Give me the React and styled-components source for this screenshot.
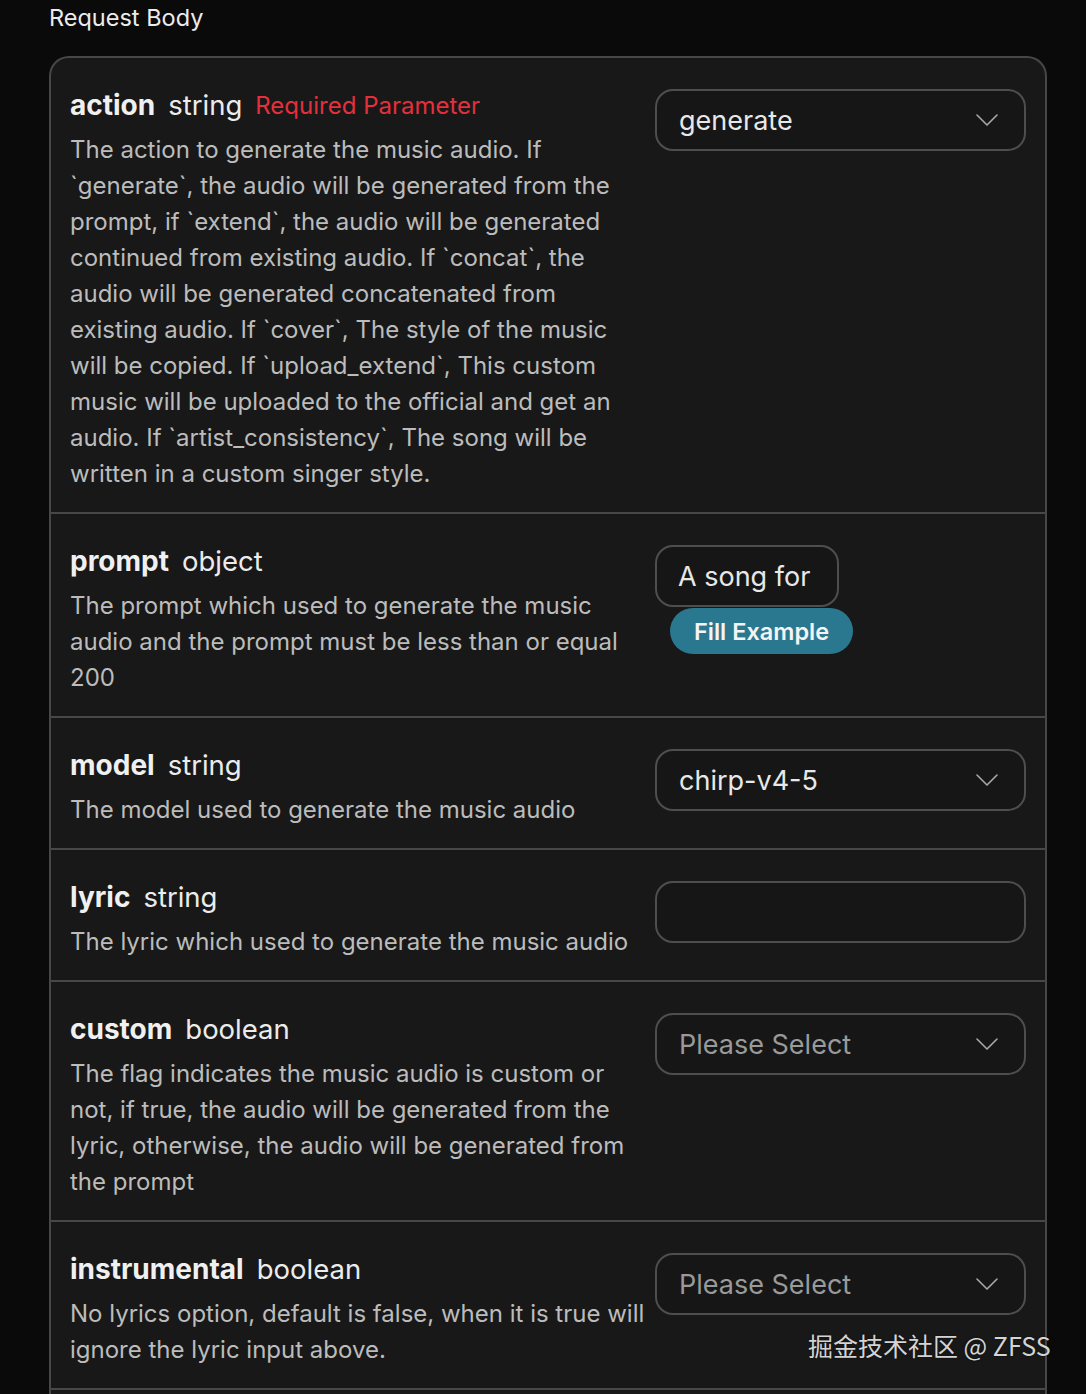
import React from 'react'
import styled, { createGlobalStyle } from 'styled-components'

const GlobalStyle = createGlobalStyle`
  body {
    margin: 0;
    background: #0a0a0a;
    font-family: Inter, "Noto Sans", "Noto Sans CJK SC", sans-serif;
    -webkit-font-smoothing: antialiased;
  }
`

const Page = styled.div`
  position: relative;
  padding: 3px 39px 0 49px;
`

const Heading = styled.h3`
  margin: 0 0 23px;
  font-size: 23.5px;
  line-height: 30px;
  font-weight: 400;
  color: #ececec;
`

const Card = styled.div`
  background: #181818;
  border: 2px solid #474747;
  border-bottom: none;
  border-radius: 20px 20px 0 0;
  overflow: hidden;
`

const Row = styled.div`
  display: flex;
  gap: 9px;
  padding: 31px 19px 20px 19px;
  border-top: ${props => (props.first ? 'none' : '2px solid #474747')};
`

const Info = styled.div`
  width: 576px;
  flex: none;
`

const TitleLine = styled.div`
  display: flex;
  align-items: baseline;
  gap: 13px;
  height: 32px;
  line-height: 32px;
  margin-bottom: 11px;
`

const Name = styled.span`
  font-size: 28px;
  font-weight: 700;
  color: #f0f0f0;
`

const Type = styled.span`
  font-size: 27.5px;
  font-weight: 400;
  color: #ececec;
`

const Required = styled.span`
  font-size: 24px;
  color: #e3303c;
  position: relative;
  top: -1px;
`

const Desc = styled.div`
  font-size: 24px;
  line-height: 36px;
  color: #bcbcbc;
`

const Control = styled.div`
  flex: 1;
  display: flex;
  flex-direction: column;
  align-items: flex-start;
`

const Field = styled.div`
  box-sizing: border-box;
  width: ${props => props.width || '100%'};
  height: 62px;
  border: 2px solid #4e4e4e;
  border-radius: 18px;
  background: #161616;
  display: flex;
  align-items: center;
  justify-content: space-between;
  padding: 0 ${props => props.padRight || 26}px 0 ${props => props.padLeft || 22}px;
  font-size: 27px;
  color: ${props => (props.placeholder ? '#9a9a9a' : '#e8e8e8')};
  white-space: nowrap;
`

const FieldText = styled.span`
  overflow: hidden;
  flex: 1;
`

const FillButton = styled.button`
  margin: 1px 0 0 15px;
  height: 46px;
  padding: 0 24px;
  border: none;
  border-radius: 23px;
  background: #2a7890;
  color: #f4f4f4;
  font-family: inherit;
  font-size: 23.5px;
  font-weight: 600;
`

const Watermark = styled.div`
  position: absolute;
  left: 808px;
  top: 1328px;
  font-size: 25px;
  line-height: 34px;
  color: #d4d4d4;
  text-shadow: 0 0 2px rgba(0, 0, 0, 0.6);
  font-family: "Noto Sans CJK SC", "Noto Sans", sans-serif;
`

const Chevron = () => (
  <svg width="22" height="12" viewBox="0 0 22 12" fill="none">
    <path d="M1 1 L11 11 L21 1" stroke="#a8a8a8" strokeWidth="1.6" strokeLinecap="round" strokeLinejoin="round" />
  </svg>
)

const params = [
  {
    name: 'action',
    type: 'string',
    required: true,
    desc: 'The action to generate the music audio. If `generate`, the audio will be generated from the prompt, if `extend`, the audio will be generated continued from existing audio. If `concat`, the audio will be generated concatenated from existing audio. If `cover`, The style of the music will be copied. If `upload_extend`, This custom music will be uploaded to the official and get an audio. If `artist_consistency`, The song will be written in a custom singer style.',
    control: 'select',
    value: 'generate',
  },
  {
    name: 'prompt',
    type: 'object',
    desc: 'The prompt which used to generate the music audio and the prompt must be less than or equal 200',
    control: 'prompt',
    value: 'A song for Christmas',
  },
  {
    name: 'model',
    type: 'string',
    desc: 'The model used to generate the music audio',
    control: 'select',
    value: 'chirp-v4-5',
  },
  {
    name: 'lyric',
    type: 'string',
    desc: 'The lyric which used to generate the music audio',
    control: 'input',
  },
  {
    name: 'custom',
    type: 'boolean',
    desc: 'The flag indicates the music audio is custom or not, if true, the audio will be generated from the lyric, otherwise, the audio will be generated from the prompt',
    control: 'select',
  },
  {
    name: 'instrumental',
    type: 'boolean',
    desc: 'No lyrics option, default is false, when it is true will ignore the lyric input above.',
    control: 'select',
  },
  {
    name: 'style',
    type: 'string',
    desc: 'The style of the music audio',
    control: 'input',
  },
]

function renderControl(p) {
  if (p.control === 'select') {
    return (
      <Field placeholder={!p.value}>
        <FieldText>{p.value || 'Please Select'}</FieldText>
        <Chevron />
      </Field>
    )
  }
  if (p.control === 'prompt') {
    return (
      <>
        <Field width="184px" padLeft={21} padRight={20}>
          <FieldText>{p.value}</FieldText>
        </Field>
        <FillButton>Fill Example</FillButton>
      </>
    )
  }
  return <Field />
}

export default function App() {
  return (
    <Page>
      <GlobalStyle />
      <Heading>Request Body</Heading>
      <Card>
        {params.map((p, i) => (
          <Row key={p.name} first={i === 0}>
            <Info>
              <TitleLine>
                <Name>{p.name}</Name>
                <Type>{p.type}</Type>
                {p.required && <Required>Required Parameter</Required>}
              </TitleLine>
              <Desc>{p.desc}</Desc>
            </Info>
            <Control>{renderControl(p)}</Control>
          </Row>
        ))}
      </Card>
      <Watermark>掘金技术社区 @ ZFSS</Watermark>
    </Page>
  )
}
